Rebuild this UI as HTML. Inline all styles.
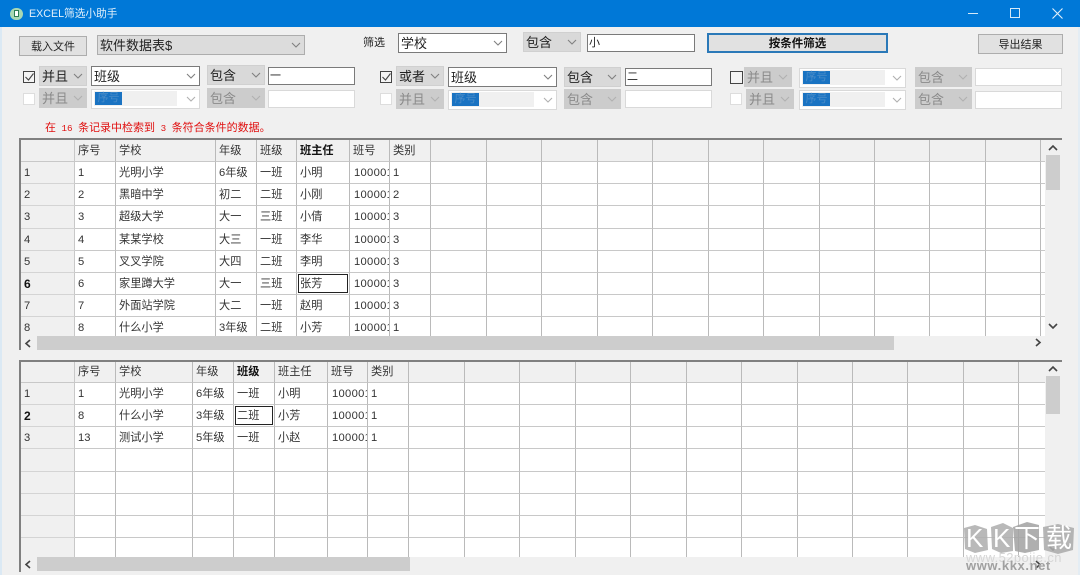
<!DOCTYPE html>
<html><head><meta charset="utf-8"><style>
html,body{margin:0;padding:0}
body{width:1080px;height:575px;overflow:hidden;background:#f0f0f0;position:relative;font-family:"Liberation Sans","Noto Sans CJK SC",sans-serif;color:#222}
div,span{position:absolute;box-sizing:border-box;white-space:nowrap}
svg{position:absolute;overflow:visible}
em{font:normal 9.2px "Liberation Mono",monospace;white-space:pre}
.btn{background:#e1e1e1;border:1px solid #adadad;text-align:center;font-size:11px;line-height:21px;color:#222}
.cb{height:20px;font-size:13px;line-height:20px;padding-left:2px;border:1px solid #adadad;background:#e1e1e1;color:#222}
.w{background:#fff;border:1px solid #7a7a7a}
.g{background:#d9d9d9;border:1px solid #d0d0d0}
.d{background:#ccc;border:1px solid #ccc;color:#8a8a8a}
.dw{background:#fff;border:1px solid #d9d9d9}
.dw i{position:absolute;left:2px;top:1px;width:83px;height:15px;background:#f0f0f0}
.dw b{position:absolute;left:3px;top:2px;width:27px;height:13px;background:#1a73c2;font:normal 11px/13px "Liberation Sans","Noto Sans CJK SC",sans-serif;color:#4a8cc8;text-align:center}
.in{height:18px;background:#fff;border:1px solid #7a7a7a;font-size:11px;line-height:16px;padding-left:1px;color:#222}
.in.o{border-color:#d9d9d9}
.ck{width:12px;height:12px;border:1px solid #444;background:#f4f4f4}
.ck.o{border-color:#ddd;background:#fff}
.cv{position:absolute;right:4px;top:7px;width:8px;height:4px}
.cv polyline{fill:none;stroke:#808080;stroke-width:1.1}
.d .cv polyline,.dw .cv polyline{stroke:#b0b0b0}
table{position:absolute;border-collapse:separate;border-spacing:0;table-layout:fixed;font-size:11.2px;background:#fff}
td{box-sizing:border-box;padding:0 0 0 3px;border-right:1px solid #bababa;border-bottom:1px solid #c8c8c8;overflow:hidden;white-space:nowrap;color:#333;line-height:14px;vertical-align:middle}
td.n{padding-left:4px;letter-spacing:.3px}
tr:first-child td{background:#f0f0f0;border-bottom-color:#c8c8c8}
td:first-child{background:#f0f0f0;border-right-color:#c8c8c8;border-bottom-color:#d4d4d4}
.wrap{position:absolute;overflow:hidden;background:#fff}
.th{background:#cdcdcd}
.ar{fill:none;stroke:#444;stroke-width:1.6}
.sel{border:1px solid #222}
.wm{color:#fff;font-size:26px;line-height:30px;top:523px}
</style></head><body>
<!-- title bar -->
<div style="left:0;top:0;width:1080px;height:27px;background:#0078d7"></div>
<div style="left:10px;top:8px;width:13px;height:12px;border-radius:6px;background:#a8d8b4"></div>
<div style="left:14px;top:10px;width:5px;height:7px;background:#fff;border:1px solid #2d7d52"></div>
<div style="left:29px;top:6px;font-size:10.7px;line-height:16px;color:#e3f0fa">EXCEL筛选小助手</div>
<div style="left:968px;top:13px;width:10px;height:1px;background:#d5e9f8"></div>
<div style="left:1010px;top:8px;width:10px;height:10px;border:1px solid #d5e9f8"></div>
<svg style="left:1052px;top:8px" width="11" height="11"><path d="M.5 .5L10.5 10.5M10.5 .5L.5 10.5" stroke="#e3f0fa" stroke-width="1.1" fill="none"/></svg>
<div style="left:0;top:27px;width:2px;height:548px;background:#dbe9f4"></div>
<div style="left:1078px;top:27px;width:2px;height:548px;background:#e4edf4"></div>

<!-- top controls -->
<div class="btn" style="left:19px;top:36px;width:68px;height:20px">载入文件</div>
<div class="cb" style="left:97px;top:35px;width:208px;background:#dcdcdc">软件数据表$<svg class="cv" viewBox="0 0 8 4"><polyline points="0,0 4,4 8,0"/></svg></div>
<div style="left:363px;top:36px;font-size:11px;line-height:15px">筛选</div>
<div class="cb w" style="left:398px;top:33px;width:109px">学校<svg class="cv" viewBox="0 0 8 4"><polyline points="0,0 4,4 8,0"/></svg></div>
<div class="cb g" style="left:523px;top:32px;width:58px">包含<svg class="cv" viewBox="0 0 8 4"><polyline points="0,0 4,4 8,0"/></svg></div>
<div class="in" style="left:587px;top:34px;width:108px">小</div>
<div class="btn" style="left:707px;top:33px;width:181px;height:20px;border:2px solid #2b79b8;font-weight:bold;font-size:11.5px;line-height:19px;color:#111">按条件筛选</div>
<div class="btn" style="left:978px;top:34px;width:85px;height:20px">导出结果</div>

<!-- condition row 1 -->
<div class="ck" style="left:23px;top:71px"></div><svg style="left:25px;top:73px" width="9" height="8"><polyline points="0.5,4 3.5,7 8.5,0.5" fill="none" stroke="#444" stroke-width="1.1"/></svg>
<div class="cb g" style="left:39px;top:66px;width:48px">并且<svg class="cv" viewBox="0 0 8 4"><polyline points="0,0 4,4 8,0"/></svg></div>
<div class="cb w" style="left:91px;top:66px;width:109px">班级<svg class="cv" viewBox="0 0 8 4"><polyline points="0,0 4,4 8,0"/></svg></div>
<div class="cb g" style="left:207px;top:65px;width:58px">包含<svg class="cv" viewBox="0 0 8 4"><polyline points="0,0 4,4 8,0"/></svg></div>
<div class="in" style="left:268px;top:67px;width:87px">一</div>

<div class="ck" style="left:380px;top:71px"></div><svg style="left:382px;top:73px" width="9" height="8"><polyline points="0.5,4 3.5,7 8.5,0.5" fill="none" stroke="#444" stroke-width="1.1"/></svg>
<div class="cb g" style="left:396px;top:66px;width:48px">或者<svg class="cv" viewBox="0 0 8 4"><polyline points="0,0 4,4 8,0"/></svg></div>
<div class="cb w" style="left:448px;top:67px;width:109px">班级<svg class="cv" viewBox="0 0 8 4"><polyline points="0,0 4,4 8,0"/></svg></div>
<div class="cb g" style="left:564px;top:67px;width:57px">包含<svg class="cv" viewBox="0 0 8 4"><polyline points="0,0 4,4 8,0"/></svg></div>
<div class="in" style="left:625px;top:68px;width:87px">二</div>

<div class="ck" style="left:730px;top:71px;width:13px;height:13px"></div>
<div class="cb d" style="left:744px;top:67px;width:48px">并且<svg class="cv" viewBox="0 0 8 4"><polyline points="0,0 4,4 8,0"/></svg></div>
<div class="cb dw" style="left:799px;top:68px;width:107px"><i></i><b>序号</b><svg class="cv" viewBox="0 0 8 4"><polyline points="0,0 4,4 8,0"/></svg></div>
<div class="cb d" style="left:915px;top:67px;width:57px">包含<svg class="cv" viewBox="0 0 8 4"><polyline points="0,0 4,4 8,0"/></svg></div>
<div class="in o" style="left:975px;top:68px;width:87px"></div>

<!-- condition row 2 -->
<div class="ck o" style="left:23px;top:93px"></div>
<div class="cb d" style="left:39px;top:88px;width:48px">并且<svg class="cv" viewBox="0 0 8 4"><polyline points="0,0 4,4 8,0"/></svg></div>
<div class="cb dw" style="left:91px;top:89px;width:109px"><i></i><b>序号</b><svg class="cv" viewBox="0 0 8 4"><polyline points="0,0 4,4 8,0"/></svg></div>
<div class="cb d" style="left:207px;top:88px;width:58px">包含<svg class="cv" viewBox="0 0 8 4"><polyline points="0,0 4,4 8,0"/></svg></div>
<div class="in o" style="left:268px;top:90px;width:87px"></div>

<div class="ck o" style="left:380px;top:93px"></div>
<div class="cb d" style="left:396px;top:89px;width:48px">并且<svg class="cv" viewBox="0 0 8 4"><polyline points="0,0 4,4 8,0"/></svg></div>
<div class="cb dw" style="left:448px;top:90px;width:109px"><i></i><b>序号</b><svg class="cv" viewBox="0 0 8 4"><polyline points="0,0 4,4 8,0"/></svg></div>
<div class="cb d" style="left:564px;top:89px;width:57px">包含<svg class="cv" viewBox="0 0 8 4"><polyline points="0,0 4,4 8,0"/></svg></div>
<div class="in o" style="left:625px;top:90px;width:87px"></div>

<div class="ck o" style="left:730px;top:93px"></div>
<div class="cb d" style="left:746px;top:89px;width:48px">并且<svg class="cv" viewBox="0 0 8 4"><polyline points="0,0 4,4 8,0"/></svg></div>
<div class="cb dw" style="left:799px;top:90px;width:107px"><i></i><b>序号</b><svg class="cv" viewBox="0 0 8 4"><polyline points="0,0 4,4 8,0"/></svg></div>
<div class="cb d" style="left:915px;top:89px;width:57px">包含<svg class="cv" viewBox="0 0 8 4"><polyline points="0,0 4,4 8,0"/></svg></div>
<div class="in o" style="left:975px;top:91px;width:87px"></div>

<div style="left:45px;top:121px;font-size:11px;line-height:15px;color:#e01010">在<em> 16 </em>条记录中检索到<em> 3 </em>条符合条件的数据。</div>

<!-- grid 1 -->
<div style="left:19px;top:138px;width:1043px;height:212px;border-top:2px solid #808080;border-left:2px solid #808080"></div>
<div class="wrap" style="left:21px;top:140px;width:1024px;height:196px">
<table style="left:0;top:0;width:1060px">
<colgroup><col style="width:54px"><col style="width:41px"><col style="width:100px"><col style="width:41px"><col style="width:40px"><col style="width:53px"><col style="width:40px"><col style="width:41px"><col style="width:56px"><col style="width:55px"><col style="width:56px"><col style="width:55px"><col style="width:56px"><col style="width:55px"><col style="width:56px"><col style="width:55px"><col style="width:55px"><col style="width:56px"><col style="width:55px"><col style="width:40px"></colgroup>
<tr style="height:22px"><td></td><td>序号</td><td>学校</td><td>年级</td><td>班级</td><td style="font-weight:bold;color:#111">班主任</td><td>班号</td><td>类别</td><td></td><td></td><td></td><td></td><td></td><td></td><td></td><td></td><td></td><td></td><td></td><td></td></tr>
<tr style="height:22px"><td>1</td><td>1</td><td>光明小学</td><td>6年级</td><td>一班</td><td>小明</td><td class="n">100001</td><td>1</td><td></td><td></td><td></td><td></td><td></td><td></td><td></td><td></td><td></td><td></td><td></td><td></td></tr>
<tr style="height:22px"><td>2</td><td>2</td><td>黑暗中学</td><td>初二</td><td>二班</td><td>小刚</td><td class="n">100001</td><td>2</td><td></td><td></td><td></td><td></td><td></td><td></td><td></td><td></td><td></td><td></td><td></td><td></td></tr>
<tr style="height:23px"><td>3</td><td>3</td><td>超级大学</td><td>大一</td><td>三班</td><td>小倩</td><td class="n">100001</td><td>3</td><td></td><td></td><td></td><td></td><td></td><td></td><td></td><td></td><td></td><td></td><td></td><td></td></tr>
<tr style="height:22px"><td>4</td><td>4</td><td>某某学校</td><td>大三</td><td>一班</td><td>李华</td><td class="n">100001</td><td>3</td><td></td><td></td><td></td><td></td><td></td><td></td><td></td><td></td><td></td><td></td><td></td><td></td></tr>
<tr style="height:22px"><td>5</td><td>5</td><td>叉叉学院</td><td>大四</td><td>二班</td><td>李明</td><td class="n">100001</td><td>3</td><td></td><td></td><td></td><td></td><td></td><td></td><td></td><td></td><td></td><td></td><td></td><td></td></tr>
<tr style="height:22px"><td style="font-weight:bold;color:#111;font-size:12px">6</td><td>6</td><td>家里蹲大学</td><td>大一</td><td>三班</td><td>张芳</td><td class="n">100001</td><td>3</td><td></td><td></td><td></td><td></td><td></td><td></td><td></td><td></td><td></td><td></td><td></td><td></td></tr>
<tr style="height:22px"><td>7</td><td>7</td><td>外面站学院</td><td>大二</td><td>一班</td><td>赵明</td><td class="n">100001</td><td>3</td><td></td><td></td><td></td><td></td><td></td><td></td><td></td><td></td><td></td><td></td><td></td><td></td></tr>
<tr style="height:22px"><td>8</td><td>8</td><td>什么小学</td><td>3年级</td><td>二班</td><td>小芳</td><td class="n">100001</td><td>1</td><td></td><td></td><td></td><td></td><td></td><td></td><td></td><td></td><td></td><td></td><td></td><td></td></tr>
</table>
</div>
<div class="sel" style="left:298px;top:274px;width:50px;height:19px"></div>
<div class="th" style="left:1046px;top:155px;width:14px;height:35px"></div>
<svg style="left:1048px;top:145px" width="10" height="6"><polyline class="ar" points="1,5 5,1 9,5"/></svg>
<svg style="left:1048px;top:323px" width="10" height="6"><polyline class="ar" points="1,1 5,5 9,1"/></svg>
<div style="left:21px;top:336px;width:1024px;height:14px;background:#f0f0f0"></div>
<div class="th" style="left:37px;top:336px;width:857px;height:14px"></div>
<svg style="left:25px;top:339px" width="6" height="9"><polyline class="ar" points="5,1 1,4.5 5,8"/></svg>
<svg style="left:1035px;top:338px" width="6" height="9"><polyline class="ar" points="1,1 5,4.5 1,8"/></svg>

<!-- grid 2 -->
<div style="left:19px;top:360px;width:1043px;height:212px;border-top:2px solid #808080;border-left:2px solid #808080"></div>
<div class="wrap" style="left:21px;top:362px;width:1024px;height:195px">
<table style="left:0;top:0;width:1038px">
<colgroup><col style="width:54px"><col style="width:41px"><col style="width:77px"><col style="width:41px"><col style="width:41px"><col style="width:53px"><col style="width:40px"><col style="width:41px"><col style="width:56px"><col style="width:55px"><col style="width:56px"><col style="width:55px"><col style="width:56px"><col style="width:55px"><col style="width:56px"><col style="width:55px"><col style="width:55px"><col style="width:56px"><col style="width:55px"><col style="width:40px"></colgroup>
<tr style="height:21px"><td></td><td>序号</td><td>学校</td><td>年级</td><td style="font-weight:bold;color:#111">班级</td><td>班主任</td><td>班号</td><td>类别</td><td></td><td></td><td></td><td></td><td></td><td></td><td></td><td></td><td></td><td></td><td></td><td></td></tr>
<tr style="height:22px"><td>1</td><td>1</td><td>光明小学</td><td>6年级</td><td>一班</td><td>小明</td><td class="n">100001</td><td>1</td><td></td><td></td><td></td><td></td><td></td><td></td><td></td><td></td><td></td><td></td><td></td><td></td></tr>
<tr style="height:22px"><td style="font-weight:bold;color:#111;font-size:12px">2</td><td>8</td><td>什么小学</td><td>3年级</td><td>二班</td><td>小芳</td><td class="n">100001</td><td>1</td><td></td><td></td><td></td><td></td><td></td><td></td><td></td><td></td><td></td><td></td><td></td><td></td></tr>
<tr style="height:22px"><td>3</td><td>13</td><td>测试小学</td><td>5年级</td><td>一班</td><td>小赵</td><td class="n">100001</td><td>1</td><td></td><td></td><td></td><td></td><td></td><td></td><td></td><td></td><td></td><td></td><td></td><td></td></tr>
<tr style="height:23px"><td></td><td></td><td></td><td></td><td></td><td></td><td></td><td></td><td></td><td></td><td></td><td></td><td></td><td></td><td></td><td></td><td></td><td></td><td></td><td></td></tr>
<tr style="height:22px"><td></td><td></td><td></td><td></td><td></td><td></td><td></td><td></td><td></td><td></td><td></td><td></td><td></td><td></td><td></td><td></td><td></td><td></td><td></td><td></td></tr>
<tr style="height:22px"><td></td><td></td><td></td><td></td><td></td><td></td><td></td><td></td><td></td><td></td><td></td><td></td><td></td><td></td><td></td><td></td><td></td><td></td><td></td><td></td></tr>
<tr style="height:22px"><td></td><td></td><td></td><td></td><td></td><td></td><td></td><td></td><td></td><td></td><td></td><td></td><td></td><td></td><td></td><td></td><td></td><td></td><td></td><td></td></tr>
<tr style="height:22px"><td></td><td></td><td></td><td></td><td></td><td></td><td></td><td></td><td></td><td></td><td></td><td></td><td></td><td></td><td></td><td></td><td></td><td></td><td></td><td></td></tr>
</table>
</div>
<div class="sel" style="left:235px;top:406px;width:38px;height:19px"></div>
<div class="th" style="left:1046px;top:376px;width:14px;height:38px"></div>
<svg style="left:1048px;top:366px" width="10" height="6"><polyline class="ar" points="1,5 5,1 9,5"/></svg>
<div style="left:21px;top:557px;width:1024px;height:15px;background:#f0f0f0"></div>
<div class="th" style="left:37px;top:557px;width:373px;height:14px"></div>
<svg style="left:25px;top:560px" width="6" height="9"><polyline class="ar" points="5,1 1,4.5 5,8"/></svg>
<svg style="left:1035px;top:560px" width="6" height="9"><polyline class="ar" points="1,1 5,4.5 1,8"/></svg>
<svg style="left:1048px;top:545px" width="10" height="6"><polyline class="ar" points="1,1 5,5 9,1"/></svg>

<!-- watermark -->
<svg style="left:963px;top:522px;opacity:.88" width="112" height="32"><path d="M1 6L12 3L24 7L25 28L12 31L2 27Z" fill="#b0b0b0"/><path d="M28 5L40 1L50 6L50 29L38 31L29 27Z" fill="#b0b0b0"/><path d="M50 5L64 0L76 3L76 28L62 31L52 29Z" fill="#a4a4a4"/><path d="M80 5L95 2L111 6L110 28L95 32L81 28Z" fill="#acacac"/></svg>
<div class="wm" style="left:966px">K</div>
<div class="wm" style="left:993px">K</div>
<div class="wm" style="left:1014px">下</div>
<div class="wm" style="left:1046px">载</div>
<div style="left:966px;top:551px;font-size:13px;line-height:14px;color:#d6d6d6;letter-spacing:.4px">www.52pojie.cn</div>
<div style="left:966px;top:558px;font-size:13px;line-height:15px;font-weight:bold;color:#a0a0a0;letter-spacing:.6px">www.kkx.net</div>
</body></html>
